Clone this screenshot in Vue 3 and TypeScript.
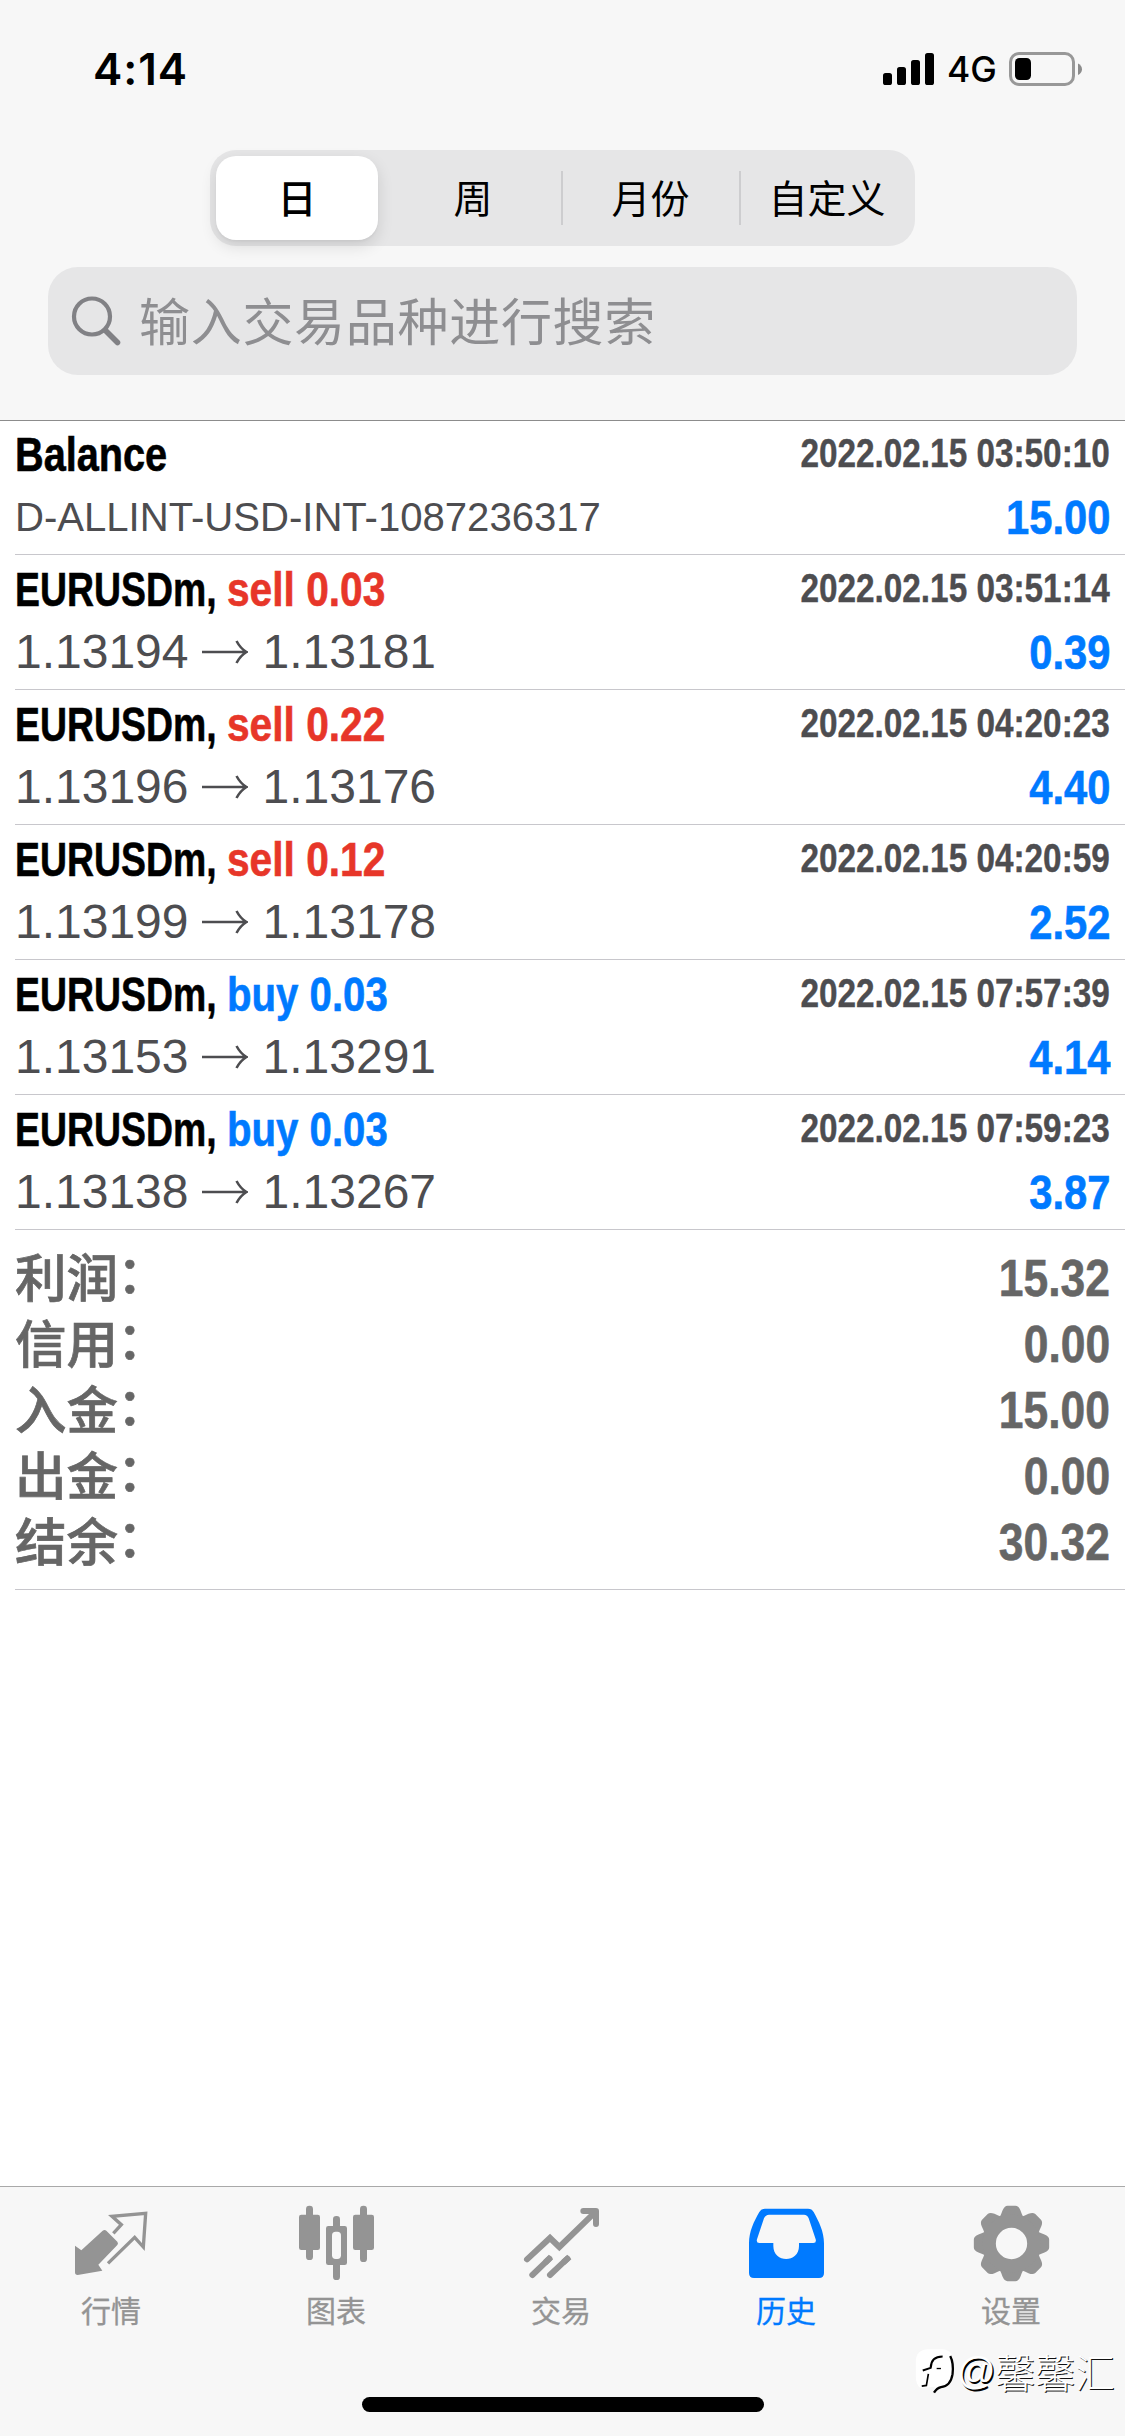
<script setup lang="ts">
import { ref } from 'vue'

interface Deal {
  symbol: string
  side?: 'buy' | 'sell'
  volume?: string
  time: string
  open?: string
  close?: string
  comment?: string
  profit: string
}

const periods: string[] = ['日', '周', '月份', '自定义']
const activePeriod = ref(0)

const deals: Deal[] = [
  { symbol: 'Balance', time: '2022.02.15 03:50:10', comment: 'D-ALLINT-USD-INT-1087236317', profit: '15.00' },
  { symbol: 'EURUSDm', side: 'sell', volume: '0.03', time: '2022.02.15 03:51:14', open: '1.13194', close: '1.13181', profit: '0.39' },
  { symbol: 'EURUSDm', side: 'sell', volume: '0.22', time: '2022.02.15 04:20:23', open: '1.13196', close: '1.13176', profit: '4.40' },
  { symbol: 'EURUSDm', side: 'sell', volume: '0.12', time: '2022.02.15 04:20:59', open: '1.13199', close: '1.13178', profit: '2.52' },
  { symbol: 'EURUSDm', side: 'buy', volume: '0.03', time: '2022.02.15 07:57:39', open: '1.13153', close: '1.13291', profit: '4.14' },
  { symbol: 'EURUSDm', side: 'buy', volume: '0.03', time: '2022.02.15 07:59:23', open: '1.13138', close: '1.13267', profit: '3.87' },
]

const totals: { label: string; value: string }[] = [
  { label: '利润', value: '15.32' },
  { label: '信用', value: '0.00' },
  { label: '入金', value: '15.00' },
  { label: '出金', value: '0.00' },
  { label: '结余', value: '30.32' },
]

const activeTab = ref('history')
</script>

<template>
  <div class="screen">
    <header class="header">
      <div class="status">
        <span class="clock">4:14</span>
        <div class="status-right">
          <svg class="signal" width="51" height="32" viewBox="0 0 51 32">
            <rect x="0" y="20" width="9" height="12" rx="2.6" />
            <rect x="14" y="14" width="9" height="18" rx="2.6" />
            <rect x="28" y="7" width="9" height="25" rx="2.6" />
            <rect x="42" y="0" width="9" height="32" rx="2.6" />
          </svg>
          <span class="network">4G</span>
          <svg width="74" height="34" viewBox="0 0 74 34">
            <rect x="1.5" y="1.5" width="63" height="31" rx="8.5" fill="none" stroke="#989898" stroke-width="3" />
            <rect x="6" y="6" width="16" height="22" rx="4.5" />
            <path d="M69 11.5c5.3 2.2 5.3 9.3 0 11.5z" fill="#8c8c8c" />
          </svg>
        </div>
      </div>

      <div class="segments">
        <div
          v-for="(p, i) in periods"
          :key="p"
          class="segment"
          :class="{ active: i === activePeriod }"
          @click="activePeriod = i"
        >
          <span>{{ p }}</span>
        </div>
      </div>

      <div class="search">
        <svg width="52" height="52" viewBox="0 0 52 52" fill="none" stroke="#818185">
          <circle cx="22" cy="21.500" r="18" stroke-width="4.200" />
          <path d="M35.500 35.500L47.500 47.500" stroke-width="5.600" stroke-linecap="round" />
        </svg>
        <span class="placeholder">输入交易品种进行搜索</span>
      </div>
    </header>

    <main class="list">
      <div v-for="d in deals" :key="d.time" class="deal">
        <div class="line">
          <div v-if="d.side" class="symbol">
            <span class="pair">{{ d.symbol }},&nbsp;</span><span class="side" :class="d.side">{{ d.side }} {{ d.volume }}</span>
          </div>
          <div v-else class="symbol balance">{{ d.symbol }}</div>
          <div class="time">{{ d.time }}</div>
        </div>
        <div class="line">
          <div v-if="d.comment" class="comment">{{ d.comment }}</div>
          <div v-else class="prices">
            <span>{{ d.open }}</span>
            <svg width="46" height="26" viewBox="0 0 46 26" fill="none" stroke="#4d4d50" stroke-width="2.600">
              <path d="M0 13H44M34.500 2Q38.500 9.500 44.500 13Q38.500 16.500 34.500 24" />
            </svg>
            <span>{{ d.close }}</span>
          </div>
          <div class="profit">{{ d.profit }}</div>
        </div>
      </div>

      <div class="totals">
        <div v-for="t in totals" :key="t.label" class="total">
          <span class="total-label">{{ t.label }}<i>：</i></span>
          <span class="total-value">{{ t.value }}</span>
        </div>
      </div>
    </main>

    <footer class="footer">
      <nav class="tabs">
        <div class="tab" :class="{ on: activeTab === 'quotes' }" @click="activeTab = 'quotes'">
          <svg viewBox="87 60 252 252">
            <path d="M188 152q6-4 11 0l33 33q4 5 0 10l-57 59 12 18-74 13q-8 0-8-8v-80l19 14z" fill="currentColor" />
            <path d="M220 160L244 134L216 109L317 100L310 201L284 172L204 250" fill="none" stroke="currentColor" stroke-width="10" />
          </svg>
          <span>行情</span>
        </div>
        <div class="tab" :class="{ on: activeTab === 'charts' }" @click="activeTab = 'charts'">
          <svg viewBox="762 60 252 252">
            <g fill="currentColor">
              <rect x="798" y="77" width="21" height="163" rx="10" />
              <rect x="777" y="104" width="63" height="106" rx="7" />
              <rect x="960" y="77" width="21" height="169" rx="10" />
              <rect x="939" y="104" width="63" height="106" rx="7" />
              <rect x="879" y="108" width="21" height="192" rx="10" />
              <rect x="858" y="138" width="63" height="117" rx="7" />
            </g>
            <rect x="876" y="155" width="27" height="82" rx="11" fill="#f7f7f7" />
          </svg>
          <span>图表</span>
        </div>
        <div class="tab" :class="{ on: activeTab === 'trade' }" @click="activeTab = 'trade'">
          <svg viewBox="117 60 252 252" fill="none" stroke="currentColor" stroke-width="18" stroke-linecap="round">
            <path d="M141 238L210 174L238 201L344 98" />
            <path d="M310 93H348V132" stroke-linejoin="round" />
            <path d="M157 285L208 236M210 285L262 236" />
            <path d="M196 247.500L213 231M250 247.500L268 231" stroke-linecap="butt" />
          </svg>
          <span>交易</span>
        </div>
        <div class="tab" :class="{ on: activeTab === 'history' }" @click="activeTab = 'history'">
          <svg viewBox="792 60 252 252">
            <path
              fill="currentColor"
              fill-rule="evenodd"
              d="M855 86H984Q996 86 1001 96C1016 124 1032 154 1032 190V279Q1032 294 1017 294H822Q807 294 807 279V190C807 154 822 124 838 96Q843 86 855 86ZM867 104Q857 104 852 115L831 178Q828 189 838 189H880V198C880 250 957 250 957 198V189H1000Q1010 189 1007 178L986 115Q982 104 972 104Z"
            />
          </svg>
          <span>历史</span>
        </div>
        <div class="tab" :class="{ on: activeTab === 'settings' }" @click="activeTab = 'settings'">
          <svg viewBox="387 60 252 252">
            <g fill="currentColor" transform="translate(514.500 190.500)">
              <path
                v-for="a in 8"
                :key="a"
                :transform="`rotate(${a * 45})`"
                d="M-36 -78Q-31 -87 -27 -99Q-21 -113 -12 -113H12Q21 -113 27 -99Q31 -87 36 -78L20 -66H-20Z"
              />
              <path fill-rule="evenodd" d="M-87 0A87 87 0 1 1 87 0A87 87 0 1 1 -87 0ZM-47 0A47 47 0 1 0 47 0A47 47 0 1 0 -47 0Z" />
            </g>
          </svg>
          <span>设置</span>
        </div>
      </nav>
      <div class="home-bar"></div>
    </footer>

    <div class="watermark">
      <svg width="45" height="53" viewBox="215 510 135 160">
        <path d="M226 560Q226 524 264 523H306Q338 524 338 560V600Q336 636 300 636L283 650V636L240 640Q226 632 226 600Z" fill="#fff" />
        <g fill="none" stroke="#000">
          <path d="M247 587L271 579Q272 545 307 545" stroke-width="6" />
          <path d="M330 543Q341 565 337 598Q331 635 302 637Q289 640 281 654" stroke-width="7" />
          <path d="M264 597L258 632L244 634" stroke-width="5" />
          <path d="M289 581H302" stroke-width="4" />
        </g>
      </svg>
      <span class="at">@</span><span class="author">馨馨汇</span>
    </div>
  </div>
</template>

<style>
body {
  margin: 0;
  background: #fff;
}
</style>

<style scoped>
.screen {
  position: relative;
  display: flex;
  flex-direction: column;
  width: 1125px;
  height: 2436px;
  overflow: hidden;
  background: #fff;
  color: #000;
  font-family: 'Liberation Sans', 'Noto Sans CJK SC', sans-serif;
}

.header {
  box-sizing: border-box;
  display: flex;
  flex-direction: column;
  align-items: center;
  height: 421px;
  flex: none;
  background: #f7f7f7;
  border-bottom: 1px solid #8c8c8c;
}

.status {
  box-sizing: border-box;
  display: flex;
  align-items: center;
  justify-content: space-between;
  width: 100%;
  height: 138px;
  padding: 0 42px 0 93px;
  font-family: Inter, sans-serif;
}

.clock {
  font-size: 44px;
  font-weight: 600;
  letter-spacing: 0.9px;
  line-height: 60px;
}

.status-right {
  display: flex;
  align-items: center;
}

.signal {
  margin-right: -1px;
}

.network {
  width: 50px;
  margin: 2px 12px 0 14px;
  font-size: 35.5px;
  font-weight: 500;
  line-height: 40px;
}

.segments {
  box-sizing: border-box;
  display: grid;
  grid-template-columns: 174px 178px 178px 175px;
  width: 705px;
  height: 96px;
  margin-top: 12px;
  border-radius: 26px;
  background: #e6e6e7;
  font-family: 'Noto Sans CJK SC', sans-serif;
  font-size: 39px;
  line-height: 52px;
}

.segment {
  box-sizing: border-box;
  display: flex;
  align-items: center;
  justify-content: center;
  padding-bottom: 4px;
}

.segment + .segment + .segment {
  background: linear-gradient(#cdcdcf, #cdcdcf) left center / 2px 54px no-repeat;
  margin-left: -1px;
}

.segment.active {
  margin: 6px;
  border-radius: 20px;
  background: #fff;
  box-shadow: 0 6px 16px rgba(0, 0, 0, 0.12), 0 2px 2px rgba(0, 0, 0, 0.03);
  font-weight: 500;
}

.search {
  box-sizing: border-box;
  display: flex;
  align-items: center;
  width: 1029px;
  height: 108px;
  margin-top: 21px;
  padding: 0 22px;
  border-radius: 30px;
  background: #e6e6e7;
}

.placeholder {
  margin: -5px 0 0 17px;
  color: #8e8e91;
  font-family: 'Noto Sans CJK SC', sans-serif;
  font-size: 51px;
  letter-spacing: 0.7px;
  line-height: 70px;
}

.list {
  flex: 1;
}

.deal {
  box-sizing: border-box;
  height: 135px;
  margin-left: 15px;
  padding: 4px 15px 0 0;
  border-bottom: 1px solid #c8c7cc;
}

.deal:first-child {
  height: 134px;
  padding-top: 3px;
}

.line {
  display: flex;
  justify-content: space-between;
  height: 60px;
  margin-bottom: 3px;
  line-height: 60px;
  white-space: nowrap;
}

/* condensed faces are drawn by narrowing the regular-width bold */
.symbol {
  font-size: 48.7px;
  font-weight: 700;
  -webkit-text-stroke: 0.6px;
  transform: scaleX(0.768);
  transform-origin: left;
}

.balance {
  transform: scaleX(0.815);
}

.side {
  display: inline-block;
  transform: scaleX(1.088);
  transform-origin: left;
}

.sell {
  color: #e73629;
}

.buy {
  color: #007aff;
  transform: scaleX(1.075);
}

.time {
  color: #4d4d50;
  font-size: 40.7px;
  font-weight: 700;
  line-height: 59px;
  -webkit-text-stroke: 0.4px;
  transform: scaleX(0.819);
  transform-origin: right;
}

.comment {
  color: #4d4d50;
  font-size: 40.7px;
  line-height: 61px;
  transform: scaleX(0.985);
  transform-origin: left;
}

.prices {
  display: flex;
  align-items: center;
  color: #4d4d50;
  font-size: 48px;
  line-height: 62px;
}

.prices svg {
  margin: 0 15px 0 13px;
}

.profit {
  color: #007aff;
  font-size: 48.5px;
  font-weight: 700;
  -webkit-text-stroke: 0.6px;
  transform: scaleX(0.86);
  transform-origin: right;
}

.totals {
  margin-left: 15px;
  padding: 14px 15px 15px 0;
  border-bottom: 1px solid #c8c7cc;
  color: #666;
}

.total {
  display: flex;
  justify-content: space-between;
  height: 66px;
  line-height: 66px;
}

.total-label {
  margin-top: -2px;
  font-family: 'Noto Sans CJK SC', sans-serif;
  font-size: 51.5px;
  font-weight: 500;
  -webkit-text-stroke: 0.7px;
}

.total-label i {
  position: relative;
  top: -4px;
  left: -1px;
  font-style: normal;
}

.total-value {
  margin-top: 1px;
  font-size: 51.5px;
  font-weight: 700;
  -webkit-text-stroke: 0.6px;
  transform: scaleX(0.862);
  transform-origin: right;
}

.footer {
  box-sizing: border-box;
  display: flex;
  flex-direction: column;
  align-items: center;
  justify-content: space-between;
  height: 250px;
  flex: none;
  padding: 13px 0 24px;
  border-top: 1px solid #a9a9a9;
  background: #f7f7f7;
}

.tabs {
  display: grid;
  grid-template-columns: repeat(5, 225px);
  margin-left: -3px;
}

.tab {
  display: flex;
  flex-direction: column;
  align-items: center;
  color: #949494;
  font-family: 'Noto Sans CJK SC', sans-serif;
  font-size: 30px;
  line-height: 44px;
}

.tab.on {
  color: #007aff;
}

.tab svg {
  width: 84px;
  height: 84px;
}

.tab span {
  margin-top: 3px;
  -webkit-text-stroke: 0.3px;
}

.home-bar {
  width: 402px;
  height: 15px;
  border-radius: 8px;
  background: #000;
}

.watermark {
  position: absolute;
  left: 912px;
  top: 2345px;
  display: flex;
  align-items: flex-start;
  color: #fff;
  line-height: 53px;
}

.at {
  width: 38px;
  font-size: 38px;
  text-shadow: 1.5px 1.5px 0 #000;
}

.author {
  font-family: 'Noto Sans CJK SC', sans-serif;
  font-size: 40px;
  font-weight: 300;
  text-shadow: 1px 1px 0 #111;
}
</style>
